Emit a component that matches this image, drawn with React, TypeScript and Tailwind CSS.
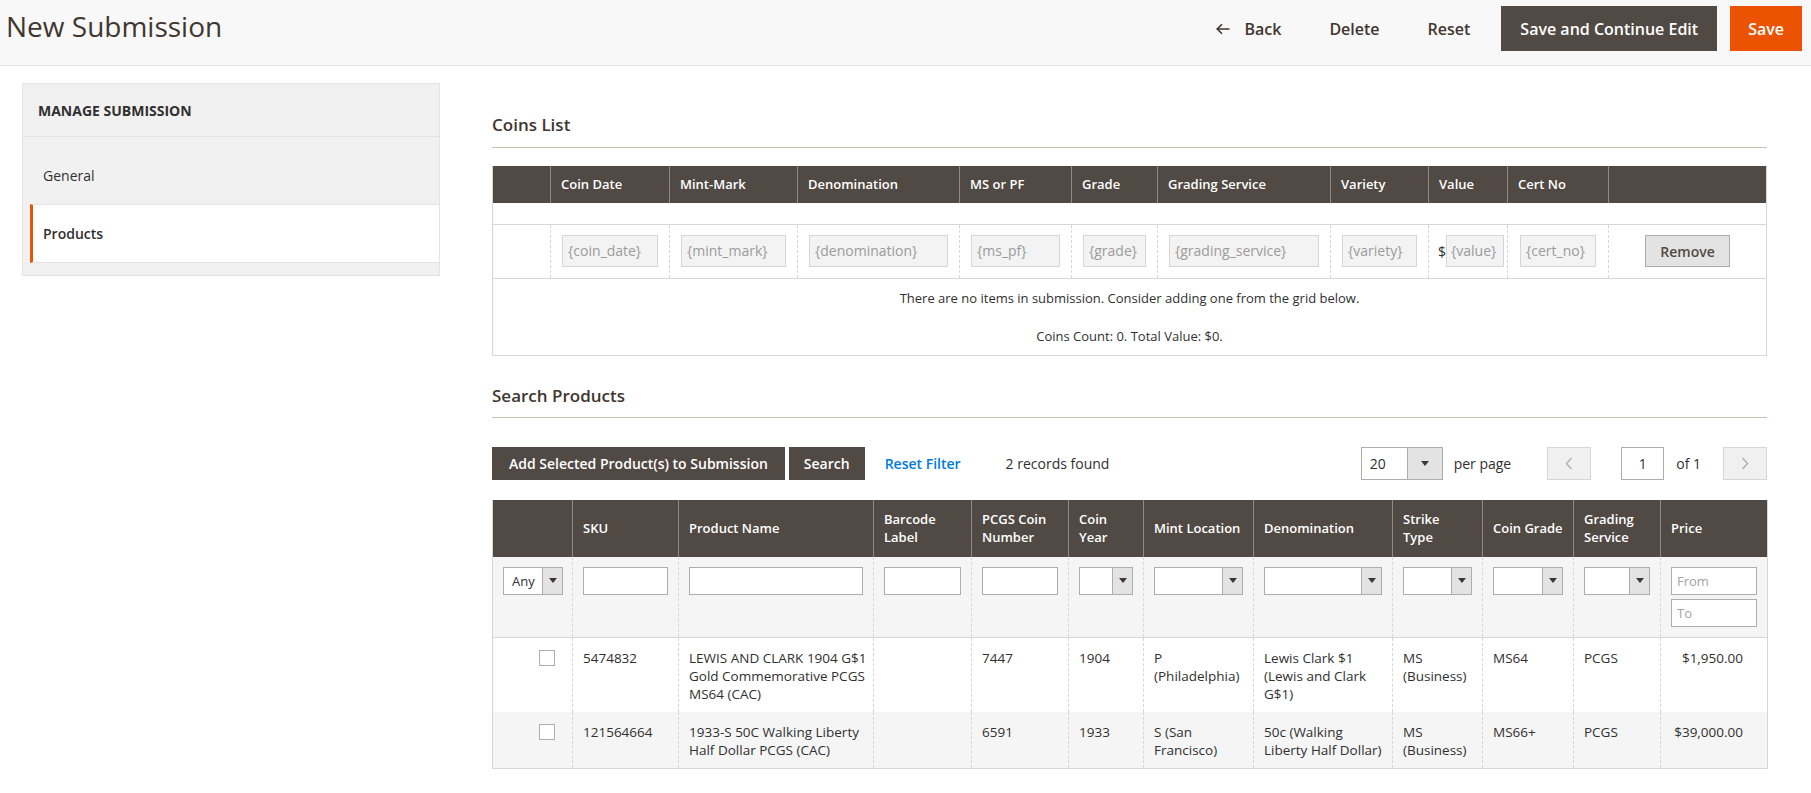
import React from 'react';

// Magento-style admin page: "New Submission" with coins list + product search grid

const COIN_COLS = ['w-[58px]', 'w-[119px]', 'w-[128px]', 'w-[162px]', 'w-[112px]', 'w-[86px]', 'w-[173px]', 'w-[98px]', 'w-[79px]', 'w-[101px]', 'w-[158px]'];
const COIN_HEADS = ['', 'Coin Date', 'Mint-Mark', 'Denomination', 'MS or PF', 'Grade', 'Grading Service', 'Variety', 'Value', 'Cert No', ''];
const COIN_FIELDS = ['{coin_date}', '{mint_mark}', '{denomination}', '{ms_pf}', '{grade}', '{grading_service}', '{variety}'];

const PROD_COLS = ['w-[80px]', 'w-[106px]', 'w-[195px]', 'w-[98px]', 'w-[97px]', 'w-[75px]', 'w-[110px]', 'w-[139px]', 'w-[90px]', 'w-[91px]', 'w-[87px]', 'w-[107px]'];
const PROD_HEADS: string[][] = [
  [],
  ['SKU'],
  ['Product Name'],
  ['Barcode', 'Label'],
  ['PCGS Coin', 'Number'],
  ['Coin', 'Year'],
  ['Mint Location'],
  ['Denomination'],
  ['Strike', 'Type'],
  ['Coin Grade'],
  ['Grading', 'Service'],
  ['Price'],
];

const PRODUCTS = [
  {
    sku: '5474832',
    name: ['LEWIS AND CLARK 1904 G$1', 'Gold Commemorative PCGS', 'MS64 (CAC)'],
    barcode: [],
    pcgs: '7447',
    year: '1904',
    mint: ['P', '(Philadelphia)'],
    denom: ['Lewis Clark $1', '(Lewis and Clark', 'G$1)'],
    strike: ['MS', '(Business)'],
    grade: 'MS64',
    service: 'PCGS',
    price: '$1,950.00',
    bg: 'bg-white',
  },
  {
    sku: '121564664',
    name: ['1933-S 50C Walking Liberty', 'Half Dollar PCGS (CAC)'],
    barcode: [],
    pcgs: '6591',
    year: '1933',
    mint: ['S (San', 'Francisco)'],
    denom: ['50c (Walking', 'Liberty Half Dollar)'],
    strike: ['MS', '(Business)'],
    grade: 'MS66+',
    service: 'PCGS',
    price: '$39,000.00',
    bg: 'bg-[#f5f5f5]',
  },
];

function Caret() {
  return <span className="h-0 w-0 border-x-[4px] border-t-[5px] border-x-transparent border-t-[#41362f]" />;
}

function FilterSelect({ label, className = 'w-full' }: { label?: string; className?: string }) {
  return (
    <div className={`flex h-[28px] border border-[#adadad] bg-white ${className}`}>
      <span className="flex-1 pl-[8px] text-[13px] leading-[26px] text-[#303030]">{label}</span>
      <span className="flex w-[20px] items-center justify-center border-l border-[#adadad] bg-[#e3e3e3]">
        <Caret />
      </span>
    </div>
  );
}

function FilterInput({ placeholder }: { placeholder?: string }) {
  return (
    <input
      readOnly
      placeholder={placeholder}
      className="block h-[28px] w-full border border-[#adadad] bg-white px-[5px] text-[13px] text-[#303030] outline-none placeholder:text-[#a3a3a3]"
    />
  );
}

function Lines({ lines }: { lines: string[] }) {
  return (
    <>
      {lines.map((l) => (
        <div key={l} className="whitespace-nowrap">
          {l}
        </div>
      ))}
    </>
  );
}

const thCoin = 'border-l border-[#8f8884] pl-[10px] text-left text-[13px] font-semibold text-white first:border-l-0';
const tdDash = 'border-l border-dashed border-[#d6d6d6] first:border-l-0';
const tdData = `${tdDash} pb-[9px] pl-[10px] pt-[11px]`;

export default function App() {
  return (
    <div className="min-h-[793px] bg-white font-['Open_Sans','Liberation_Sans',sans-serif] text-[#303030]">
      {/* page header */}
      <header className="flex h-[66px] items-start border-b border-[#e3e3e3] bg-[#f8f8f8] pl-[6px] pr-[9px] pt-[6px]">
        <h1 className="mt-[1px] text-[28px] font-normal leading-[38px] text-[#41362f]">New Submission</h1>
        <div className="ml-auto flex items-center gap-[16px]">
          <button className="flex h-[45px] items-center gap-[14px] px-[16px] text-[16px] font-semibold text-[#41362f]">
            <svg width="14" height="12" viewBox="0 0 14 12" fill="none">
              <path d="M6 1.2L1.2 6L6 10.8M1.2 6H13.5" stroke="#41362f" strokeWidth="1.6" />
            </svg>
            Back
          </button>
          <button className="h-[45px] px-[16px] text-[16px] font-semibold text-[#41362f]">Delete</button>
          <button className="h-[45px] px-[16px] text-[16px] font-semibold text-[#41362f]">Reset</button>
          <div className="-ml-[1px] flex gap-[13px]">
            <button className="h-[45px] bg-[#514943] px-[19px] text-[16px] font-semibold text-white">Save and Continue Edit</button>
            <button className="h-[45px] bg-[#eb5202] px-[18px] text-[16px] font-semibold text-white">Save</button>
          </div>
        </div>
      </header>

      <div className="flex gap-[52px] pl-[22px] pr-[44px] pt-[17px]">
        {/* side nav */}
        <aside className="w-[418px] shrink-0 self-start border border-[#e3e3e3] bg-[#f1f1f1] pb-[12px]">
          <div className="flex h-[53px] items-center border-b border-[#e3e3e3] px-[15px] text-[14px] font-bold uppercase text-[#303030]">
            Manage Submission
          </div>
          <div className="h-[67px] pl-[20px] pt-[29px] text-[14px] leading-[19px] text-[#303030]">General</div>
          <div className="ml-[7px] flex h-[59px] items-center border-y border-l-[3px] border-[#e3e3e3] border-l-[#eb5202] bg-white pl-[10px] text-[14px] font-semibold text-[#303030]">
            Products
          </div>
        </aside>

        <main className="min-w-0 flex-1">
          {/* Coins list */}
          <h2 className="border-b border-[#cac3b4] pb-[10px] pt-[30px] text-[17px] font-semibold leading-[24px] text-[#41362f]">
            Coins List
          </h2>
          <table className="mt-[18px] w-full table-fixed border-collapse border-x border-b border-[#d6d6d6]">
            <colgroup>
              {COIN_COLS.map((c, i) => (
                <col key={i} className={c} />
              ))}
            </colgroup>
            <thead>
              <tr className="h-[37px] bg-[#514943]">
                {COIN_HEADS.map((h, i) => (
                  <th key={i} className={thCoin}>
                    {h}
                  </th>
                ))}
              </tr>
            </thead>
            <tbody>
              <tr className="h-[21px] border-b border-[#d6d6d6]">
                <td colSpan={11} />
              </tr>
              <tr className="h-[54px] border-b border-[#d6d6d6]">
                <td className={tdDash} />
                {COIN_FIELDS.map((f) => (
                  <td key={f} className={`${tdDash} px-[11px]`}>
                    <div className="h-[32px] truncate border border-[#d6d6d6] bg-[#f3f3f3] px-[5px] text-[14px] leading-[30px] text-[#9b9b9b]">
                      {f}
                    </div>
                  </td>
                ))}
                <td className={`${tdDash} pl-[9px] pr-[3px]`}>
                  <div className="flex items-center">
                    <span className="text-[14px] text-[#303030]">$</span>
                    <div className="h-[32px] flex-1 truncate border border-[#d6d6d6] bg-[#f3f3f3] px-[4px] text-[14px] leading-[30px] text-[#9b9b9b]">
                      {'{value}'}
                    </div>
                  </div>
                </td>
                <td className={`${tdDash} px-[12px]`}>
                  <div className="h-[32px] truncate border border-[#d6d6d6] bg-[#f3f3f3] px-[5px] text-[14px] leading-[30px] text-[#9b9b9b]">
                    {'{cert_no}'}
                  </div>
                </td>
                <td className={`${tdDash} text-center`}>
                  <button className="h-[32px] border border-[#adadad] bg-[#e3e3e3] px-[14px] text-[14px] font-semibold text-[#514943]">
                    Remove
                  </button>
                </td>
              </tr>
              <tr>
                <td colSpan={11} className="py-[10px] text-center text-[13px] leading-[18px] text-[#303030]">
                  <div>There are no items in submission. Consider adding one from the grid below.</div>
                  <div className="mt-[20px]">Coins Count: 0. Total Value: $0.</div>
                </td>
              </tr>
            </tbody>
          </table>

          {/* Search products */}
          <h2 className="mt-[28px] border-b border-[#cac3b4] pb-[9px] text-[17px] font-semibold leading-[24px] text-[#41362f]">
            Search Products
          </h2>
          <div className="mt-[29px] flex h-[33px] items-center">
            <button className="h-[33px] bg-[#514943] px-[17px] text-[14px] font-semibold text-white">
              Add Selected Product(s) to Submission
            </button>
            <button className="ml-[4px] h-[33px] bg-[#514943] px-[15px] text-[14px] font-semibold text-white">Search</button>
            <span className="ml-[20px] text-[14px] font-semibold text-[#007bdb]">Reset Filter</span>
            <span className="ml-[45px] text-[14px] text-[#303030]">2 records found</span>

            <div className="ml-auto flex items-center">
              <div className="flex h-[33px] w-[82px] border border-[#adadad] bg-white">
                <span className="flex-1 pl-[8px] text-[14px] leading-[31px] text-[#303030]">20</span>
                <span className="flex w-[35px] items-center justify-center border-l border-[#adadad] bg-[#e3e3e3]">
                  <Caret />
                </span>
              </div>
              <span className="ml-[11px] text-[14px] text-[#303030]">per page</span>
              <button className="ml-[36px] flex h-[33px] w-[44px] items-center justify-center border border-[#d6d6d6] bg-[#f0f0f0]">
                <svg width="8" height="13" viewBox="0 0 8 13" fill="none">
                  <path d="M6.5 1L1.5 6.5L6.5 12" stroke="#adadad" strokeWidth="1.3" />
                </svg>
              </button>
              <div className="ml-[30px] h-[33px] w-[43px] border border-[#adadad] bg-white text-center text-[14px] leading-[31px] text-[#303030]">
                1
              </div>
              <span className="ml-[12px] text-[14px] text-[#303030]">of 1</span>
              <button className="ml-[22px] flex h-[33px] w-[44px] items-center justify-center border border-[#d6d6d6] bg-[#f0f0f0]">
                <svg width="8" height="13" viewBox="0 0 8 13" fill="none">
                  <path d="M1.5 1L6.5 6.5L1.5 12" stroke="#adadad" strokeWidth="1.3" />
                </svg>
              </button>
            </div>
          </div>

          <table className="mt-[20px] w-full table-fixed border-collapse border-x border-b border-[#d6d6d6] text-[13.5px] leading-[18px]">
            <colgroup>
              {PROD_COLS.map((c, i) => (
                <col key={i} className={c} />
              ))}
            </colgroup>
            <thead>
              <tr className="h-[57px] bg-[#514943]">
                {PROD_HEADS.map((h, i) => (
                  <th key={i} className={`${thCoin} leading-[18px]`}>
                    <Lines lines={h} />
                  </th>
                ))}
              </tr>
            </thead>
            <tbody>
              <tr className="border-b border-[#d6d6d6] bg-[#f5f5f5] align-top">
                <td className="p-[10px]">
                  <FilterSelect label="Any" className="w-[60px]" />
                </td>
                {[0, 1, 2, 3].map((i) => (
                  <td key={i} className={`${tdDash} p-[10px]`}>
                    <FilterInput />
                  </td>
                ))}
                {[0, 1, 2, 3, 4, 5].map((i) => (
                  <td key={`s${i}`} className={`${tdDash} p-[10px]`}>
                    <FilterSelect />
                  </td>
                ))}
                <td className={`${tdDash} p-[10px]`}>
                  <FilterInput placeholder="From" />
                  <div className="mt-[4px]">
                    <FilterInput placeholder="To" />
                  </div>
                </td>
              </tr>
              {PRODUCTS.map((p) => (
                <tr key={p.sku} className={`${p.bg} align-top text-[#303030]`}>
                  <td className="pb-[9px] pl-[46px] pt-[12px]">
                    <div className="h-[16px] w-[16px] border border-[#adadad] bg-white" />
                  </td>
                  <td className={tdData}>{p.sku}</td>
                  <td className={tdData}>
                    <Lines lines={p.name} />
                  </td>
                  <td className={tdData}>
                    <Lines lines={p.barcode} />
                  </td>
                  <td className={tdData}>{p.pcgs}</td>
                  <td className={tdData}>{p.year}</td>
                  <td className={tdData}>
                    <Lines lines={p.mint} />
                  </td>
                  <td className={tdData}>
                    <Lines lines={p.denom} />
                  </td>
                  <td className={tdData}>
                    <Lines lines={p.strike} />
                  </td>
                  <td className={tdData}>{p.grade}</td>
                  <td className={tdData}>{p.service}</td>
                  <td className={`${tdDash} pb-[9px] pr-[24px] pt-[11px] text-right`}>{p.price}</td>
                </tr>
              ))}
            </tbody>
          </table>
        </main>
      </div>
    </div>
  );
}
